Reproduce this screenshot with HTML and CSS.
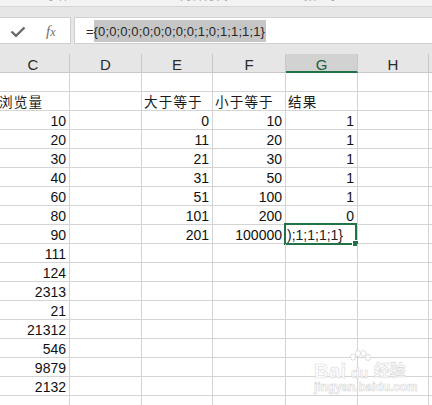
FILE: index.html
```html
<!DOCTYPE html>
<html lang="zh">
<head>
<meta charset="utf-8">
<link rel="stylesheet" href="styles.css">
</head>
<body>
<div class="app">
  <div class="ribbon">
    <span class="rl r1">字体</span>
    <span class="rl r2">对齐方式</span>
    <span class="rl r3">数字</span>
    <span class="rl r4">⊿</span>
  </div>
  <div class="toolstrip"></div>
  <div class="fbar">
    <div class="fbtns">
      <svg class="check" width="16" height="12" viewBox="0 0 16 12"><polyline points="1.5,5.5 6,9.8 14.5,1.5" fill="none" stroke="#6a6a6a" stroke-width="2.4"/></svg>
      <span class="fx"><i>f</i><i class="sub">x</i></span>
    </div>
    <div class="finput"><span class="eq">=</span><span class="selx">{0;0;0;0;0;0;0;0;0;1;0;1;1;1;1}</span></div>
  </div>
  <div class="sheet">
    <div class="h">C</div><div class="h">D</div><div class="h">E</div><div class="h">F</div><div class="h on">G</div><div class="h">H</div><div class="h"></div>

    <div class="c"></div><div class="c"></div><div class="c"></div><div class="c"></div><div class="c"></div><div class="c"></div><div class="c"></div>

    <div class="c t">浏览量</div><div class="c"></div><div class="c t">大于等于</div><div class="c t">小于等于</div><div class="c t">结果</div><div class="c"></div><div class="c"></div>

    <div class="c n">10</div><div class="c"></div><div class="c n">0</div><div class="c n">10</div><div class="c n">1</div><div class="c"></div><div class="c"></div>
    <div class="c n">20</div><div class="c"></div><div class="c n">11</div><div class="c n">20</div><div class="c n">1</div><div class="c"></div><div class="c"></div>
    <div class="c n">30</div><div class="c"></div><div class="c n">21</div><div class="c n">30</div><div class="c n">1</div><div class="c"></div><div class="c"></div>
    <div class="c n">40</div><div class="c"></div><div class="c n">31</div><div class="c n">50</div><div class="c n">1</div><div class="c"></div><div class="c"></div>
    <div class="c n">60</div><div class="c"></div><div class="c n">51</div><div class="c n">100</div><div class="c n">1</div><div class="c"></div><div class="c"></div>
    <div class="c n">80</div><div class="c"></div><div class="c n">101</div><div class="c n">200</div><div class="c n">0</div><div class="c"></div><div class="c"></div>
    <div class="c n">90</div><div class="c"></div><div class="c n">201</div><div class="c n">100000</div><div class="c e active">);1;1;1;1}<span class="frame"></span><span class="handle"></span></div><div class="c"></div><div class="c"></div>

    <div class="c n">111</div><div class="c"></div><div class="c"></div><div class="c"></div><div class="c"></div><div class="c"></div><div class="c"></div>
    <div class="c n">124</div><div class="c"></div><div class="c"></div><div class="c"></div><div class="c"></div><div class="c"></div><div class="c"></div>
    <div class="c n">2313</div><div class="c"></div><div class="c"></div><div class="c"></div><div class="c"></div><div class="c"></div><div class="c"></div>
    <div class="c n">21</div><div class="c"></div><div class="c"></div><div class="c"></div><div class="c"></div><div class="c"></div><div class="c"></div>
    <div class="c n">21312</div><div class="c"></div><div class="c"></div><div class="c"></div><div class="c"></div><div class="c"></div><div class="c"></div>
    <div class="c n">546</div><div class="c"></div><div class="c"></div><div class="c"></div><div class="c"></div><div class="c"></div><div class="c"></div>
    <div class="c n">9879</div><div class="c"></div><div class="c"></div><div class="c"></div><div class="c"></div><div class="c"></div><div class="c"></div>
    <div class="c n">2132</div><div class="c"></div><div class="c"></div><div class="c"></div><div class="c"></div><div class="c"></div><div class="c"></div>
    <div class="c"></div><div class="c"></div><div class="c"></div><div class="c"></div><div class="c"></div><div class="c"></div><div class="c"></div>
  </div>
  <div class="watermark">
    <div class="wm-top">
      <span class="wm-bai">Bai</span>
      <span class="wm-paw">
        <svg width="26" height="20" viewBox="0 0 26 20"><g fill="rgba(255,255,255,0.85)" stroke="#d6d6d6" stroke-width="0.8"><ellipse cx="6" cy="7" rx="2.6" ry="3.2"/><ellipse cx="11" cy="3.4" rx="2.6" ry="3"/><ellipse cx="16.5" cy="3.4" rx="2.6" ry="3"/><ellipse cx="21" cy="7.4" rx="2.6" ry="3.2"/></g></svg>
        <span class="wm-du">du</span>
      </span>
      <span class="wm-jy">经验</span>
    </div>
    <div class="wm-url">jingyan.baidu.com</div>
  </div>
</div>
</body>
</html>
```
FILE: styles.css
```css
html, body {
  margin: 0;
  padding: 0;
}
body {
  width: 432px;
  height: 405px;
  overflow: hidden;
  background: #ffffff;
  font-family: "Liberation Sans", "Noto Sans CJK SC", sans-serif;
}
.app {
  position: relative;
  width: 432px;
  height: 405px;
  overflow: hidden;
  background: #e6e6e6;
}
.ribbon {
  height: 6px;
  background: #f3f3f3;
  border-bottom: 1px solid #d6d6d6;
  display: flex;
  align-items: flex-end;
  overflow: hidden;
}
.rl {
  flex: none;
  font-size: 12px;
  line-height: 12px;
  height: 12px;
  margin-bottom: 4px;
  color: #a6a6a6;
}
.r1 { margin-left: 46px; }
.r2 { margin-left: 110px; }
.r3 { margin-left: 76px; letter-spacing: 12px; }
.r4 { margin-left: 72px; }
.toolstrip {
  height: 10px;
}
.fbar {
  display: flex;
  height: 27px;
  gap: 3px;
}
.fbtns {
  margin-left: -1px;
  width: 72px;
  box-sizing: border-box;
  border: 1px solid #d0d0d0;
  background: #ffffff;
  display: flex;
  align-items: center;
  padding-left: 10px;
}
.check {
  display: block;
  margin-top: 3px;
}
.fx {
  margin-left: 20px;
  margin-top: 1px;
  font-family: "Liberation Serif", serif;
  color: #707070;
  font-size: 15px;
}
.fx .sub {
  font-size: 12px;
  margin-left: 0px;
}
.finput {
  flex: 1;
  box-sizing: border-box;
  border: 1px solid #d0d0d0;
  border-right: none;
  background: #ffffff;
  display: flex;
  align-items: flex-start;
  padding-top: 2px;
  padding-left: 11px;
  font-size: 13px;
  color: #262626;
  white-space: nowrap;
}
.eq {
  display: inline-block;
  line-height: 20px;
  padding-top: 2px;
}
.selx {
  display: inline-block;
  height: 22px;
  box-sizing: border-box;
  line-height: 20px;
  padding-top: 2px;
  padding-right: 1px;
  background: #c6c6c6;
  letter-spacing: 0.12px;
}
.sheet {
  margin-top: 10px;
  margin-left: -3px;
  display: grid;
  grid-template-columns: 73px 72px 71px 73px 72px 71px 72px;
  background: #ffffff;
}
.h {
  height: 19px;
  box-sizing: border-box;
  background: #e6e6e6;
  border-right: 1px solid #c8c8c8;
  border-bottom: 1px solid #c8c8c8;
  text-align: center;
  font-size: 15px;
  line-height: 17px;
  padding-top: 2px;
  color: #2b2b2b;
}
.h.on {
  background: #d2d2d2;
  border-bottom: 2px solid #217346;
  color: #1e5c3a;
}
.c {
  position: relative;
  height: 19px;
  box-sizing: border-box;
  border-right: 1px solid #d4d4d4;
  border-bottom: 1px solid #d4d4d4;
  font-size: 14px;
  line-height: 17px;
  padding-top: 2px;
  color: #111111;
  white-space: nowrap;
}
.n {
  text-align: right;
  padding-right: 3px;
}
.t {
  padding-left: 2px;
  font-size: 13.6px;
  letter-spacing: 1.1px;
  color: #1a1a1a;
}
.e {
  padding-left: 1px;
  color: #2a2020;
}
.frame {
  position: absolute;
  left: -2px;
  top: -2px;
  width: 73px;
  height: 22px;
  box-sizing: border-box;
  border: 2px solid #217346;
}
.handle {
  position: absolute;
  left: 66px;
  top: 15px;
  width: 7px;
  height: 7px;
  box-sizing: border-box;
  background: #217346;
  border: 1px solid #ffffff;
}
.watermark {
  position: absolute;
  left: 314px;
  top: 351px;
  width: 92px;
  display: flex;
  flex-direction: column;
  align-items: flex-start;
  color: rgba(255, 255, 255, 0.85);
  -webkit-text-stroke: 0.6px #d8d8d8;
  font-family: "Liberation Sans", "Noto Sans CJK SC", sans-serif;
  pointer-events: none;
}
.wm-top {
  display: flex;
  align-items: flex-end;
  height: 28px;
}
.wm-bai {
  font-size: 20px;
  font-weight: bold;
  line-height: 16px;
  letter-spacing: 0.5px;
}
.wm-paw {
  display: flex;
  flex-direction: column;
  align-items: center;
  width: 26px;
}
.wm-paw svg {
  display: block;
}
.wm-du {
  font-size: 14px;
  font-weight: bold;
  line-height: 10px;
  margin-top: -2px;
  padding-bottom: 1px;
}
.wm-jy {
  font-size: 16px;
  font-weight: bold;
  line-height: 16px;
  margin-left: 1px;
}
.wm-url {
  margin-top: 2px;
  font-size: 12px;
  line-height: 12px;
  font-weight: bold;
  letter-spacing: -0.1px;
}
```
